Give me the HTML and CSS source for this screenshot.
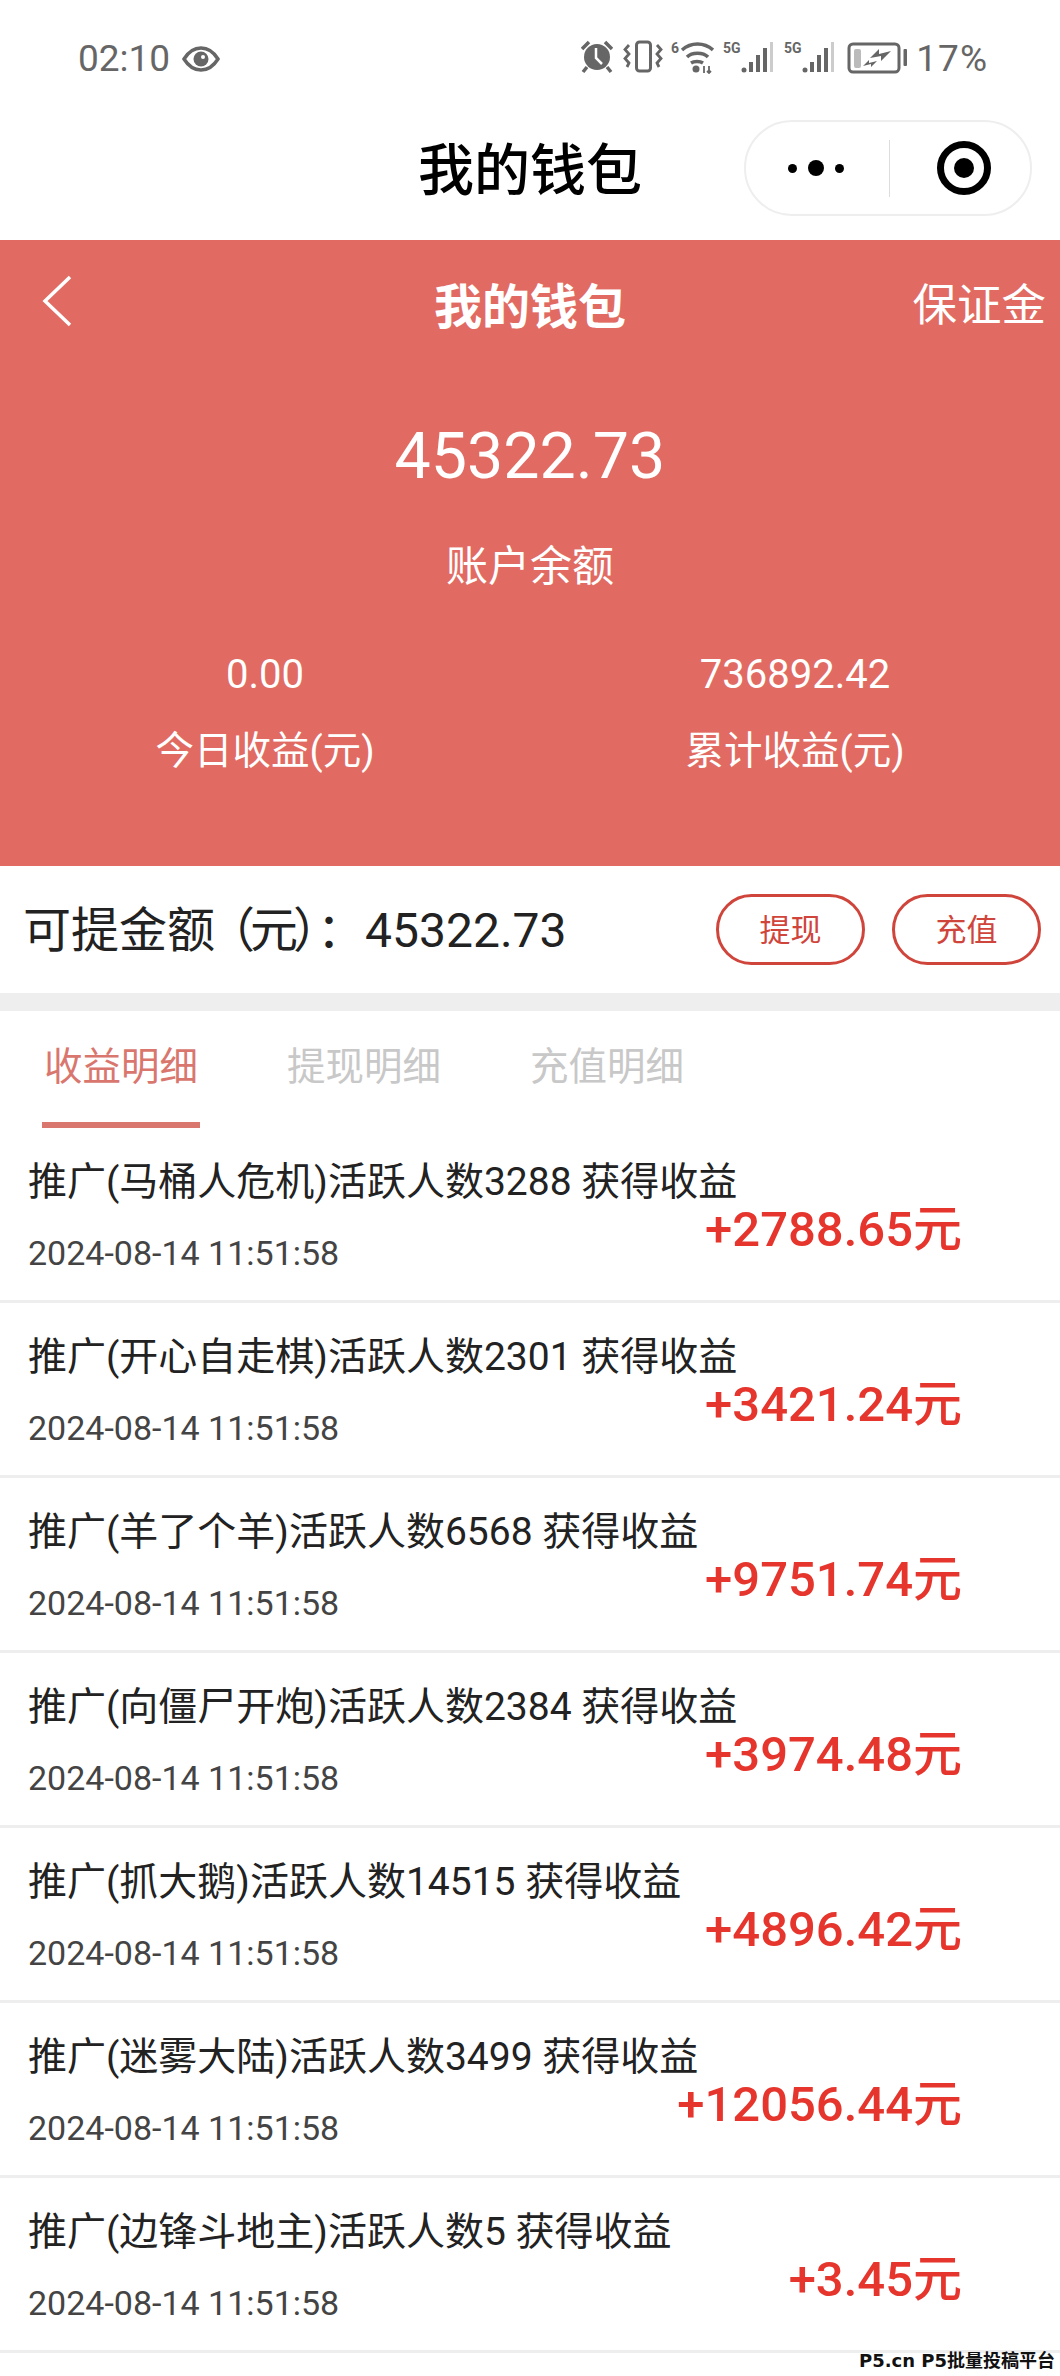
FILE: index.html
```html
<!DOCTYPE html>
<html lang="zh-CN">
<head>
    <meta charset="UTF-8">
    <title>我的钱包</title>
    <link rel="stylesheet" href="styles.css">
</head>
<body>
<div class="page">
    <div class="status">
        <div class="status-left">
            <span>02:10</span>
            <svg class="ico-eye" viewBox="0 0 38 26"><path d="M2 13C7 5 13 2 19 2s12 3 17 11c-5 8-11 11-17 11S7 21 2 13z" fill="none" stroke="#666" stroke-width="3.500"/><circle cx="19" cy="13" r="7.500" fill="#666"/><circle cx="21" cy="11" r="2" fill="#fff"/></svg>
        </div>
        <div class="status-right">
            <svg class="ico-alarm" viewBox="0 0 32 34"><circle cx="16" cy="17" r="13" fill="#666"/><path d="M15 8v10l6 6" fill="none" stroke="#fff" stroke-width="2.500"/><path d="M1 9l7-7M31 9l-7-7M6 27l-4 5M26 27l4 5" stroke="#666" stroke-width="3.500" fill="none"/></svg>
            <svg class="ico-vib" viewBox="0 0 40 34"><rect x="13.500" y="2" width="14" height="29" rx="3" fill="none" stroke="#666" stroke-width="3"/><path d="M6 5L2 9.500 6 14l-4 4.500L6 23l-2 4M34 5l4 4.500-4 4.500 4 4.500-4 4.500 2 4" fill="none" stroke="#666" stroke-width="2.800"/></svg>
            <svg class="ico-wifi" viewBox="0 0 43 34"><text x="0" y="13" class="ico-txt">6</text><path d="M11 10C20 2 33 2 42 10M16 17c5-5 16-5 21 0M20 23c3-2 9-2 12 0" fill="none" stroke="#666" stroke-width="3.500"/><circle cx="25" cy="29" r="3.500" fill="#666"/><path d="M33 33v-7M38 26v7M36 31l2 2 2-2" fill="none" stroke="#666" stroke-width="1.800"/></svg>
            <svg class="ico-sig" viewBox="0 0 50 34"><text x="0" y="13" class="ico-txt">5G</text><circle cx="21" cy="30" r="2.500" fill="#666"/><path d="M26 22h4v10h-4zM33 15h4v17h-4zM40 8h4v24h-4z" fill="#666"/><path d="M47 2h3v30h-3z" fill="#ccc"/></svg>
            <svg class="ico-sig" viewBox="0 0 50 34"><text x="0" y="13" class="ico-txt">5G</text><circle cx="21" cy="30" r="2.500" fill="#666"/><path d="M26 22h4v10h-4zM33 15h4v17h-4zM40 8h4v24h-4z" fill="#666"/><path d="M47 2h3v30h-3z" fill="#ccc"/></svg>
            <svg class="ico-batt" viewBox="0 0 60 34"><rect x="2" y="4" width="50" height="28" rx="4" fill="none" stroke="#666" stroke-width="3"/><rect x="7" y="9" width="7" height="19" rx="2" fill="#bbb"/><path d="M23 18l9-9 0 5 12-3-10 10 0-5z" fill="#666"/><path d="M16 26l6-6 0 3 8-2-6 6 0-3z" fill="#666"/><rect x="56.500" y="9" width="3.500" height="17" rx="1" fill="#666"/></svg>
            <span class="batt-num">17%</span>
        </div>
    </div>

    <div class="nav">
        <div></div>
        <div class="nav-title">我的钱包</div>
        <div class="capsule">
            <div class="capsule-dots"><i></i><b></b><i></i></div>
            <div class="capsule-line"></div>
            <div class="capsule-target"><span></span></div>
        </div>
    </div>

    <div class="head">
        <div class="head-top">
            <svg class="back" viewBox="0 0 32 52"><path d="M29 2L4 26l25 24" fill="none" stroke="#fff" stroke-width="3.500"/></svg>
            <div class="head-title">我的钱包</div>
            <div class="head-link">保证金</div>
        </div>
        <div class="balance">45322.73</div>
        <div class="balance-label">账户余额</div>
        <div class="stats">
            <div class="stat">
                <div class="stat-num">0.00</div>
                <div class="stat-label">今日收益(元)</div>
            </div>
            <div class="stat">
                <div class="stat-num">736892.42</div>
                <div class="stat-label">累计收益(元)</div>
            </div>
        </div>
    </div>

    <div class="withdraw">
        <div class="withdraw-text">可提金额<span class="unit">（元</span>）：45322.73</div>
        <div class="btns">
            <a class="btn" href="javascript:;">提现</a>
            <a class="btn" href="javascript:;">充值</a>
        </div>
    </div>

    <div class="tabs">
        <div class="tab on">收益明细</div>
        <div class="tab">提现明细</div>
        <div class="tab">充值明细</div>
    </div>

    <ul class="list">
        <li class="row">
            <div class="row-left">
                <div class="row-title">推广(马桶人危机)活跃人数3288 获得收益</div>
                <div class="row-date">2024-08-14 11:51:58</div>
            </div>
            <div class="row-money">+2788.65元</div>
        </li>
        <li class="row">
            <div class="row-left">
                <div class="row-title">推广(开心自走棋)活跃人数2301 获得收益</div>
                <div class="row-date">2024-08-14 11:51:58</div>
            </div>
            <div class="row-money">+3421.24元</div>
        </li>
        <li class="row">
            <div class="row-left">
                <div class="row-title">推广(羊了个羊)活跃人数6568 获得收益</div>
                <div class="row-date">2024-08-14 11:51:58</div>
            </div>
            <div class="row-money">+9751.74元</div>
        </li>
        <li class="row">
            <div class="row-left">
                <div class="row-title">推广(向僵尸开炮)活跃人数2384 获得收益</div>
                <div class="row-date">2024-08-14 11:51:58</div>
            </div>
            <div class="row-money">+3974.48元</div>
        </li>
        <li class="row">
            <div class="row-left">
                <div class="row-title">推广(抓大鹅)活跃人数14515 获得收益</div>
                <div class="row-date">2024-08-14 11:51:58</div>
            </div>
            <div class="row-money">+4896.42元</div>
        </li>
        <li class="row">
            <div class="row-left">
                <div class="row-title">推广(迷雾大陆)活跃人数3499 获得收益</div>
                <div class="row-date">2024-08-14 11:51:58</div>
            </div>
            <div class="row-money">+12056.44元</div>
        </li>
        <li class="row">
            <div class="row-left">
                <div class="row-title">推广(边锋斗地主)活跃人数5 获得收益</div>
                <div class="row-date">2024-08-14 11:51:58</div>
            </div>
            <div class="row-money">+3.45元</div>
        </li>
    </ul>

    <div class="mark">P5.cn P5批量投稿平台</div>
</div>
</body>
</html>
```
FILE: styles.css
```css
* {
    margin: 0;
    padding: 0;
    box-sizing: border-box;
}
body {
    font-family: Roboto, "Noto Sans CJK SC", sans-serif;
    background-color: #fff;
}
.page {
    width: 1060px;
    height: 2376px;
    position: relative;
    overflow: hidden;
}

/* status bar */
.status {
    height: 112px;
    padding: 37px 0 0 78px;
    display: flex;
    justify-content: space-between;
    color: #666;
    font-size: 37px;
    line-height: 43px;
}
.status-left {
    display: flex;
    align-items: center;
    gap: 12px;
    height: 43px;
}
.status-right {
    display: flex;
    align-items: flex-start;
    height: 43px;
    padding-right: 72px;
}
.status-right svg {
    height: 34px;
    margin-top: 3px;
}
.ico-eye { width: 38px; height: 26px; }
.ico-alarm { width: 32px; margin-right: 10px; }
.ico-vib { width: 40px; margin-right: 8px; }
.ico-wifi { width: 43px; margin-right: 9px; }
.ico-sig { width: 50px; margin-right: 11px; }
.ico-sig + .ico-batt { margin-left: 2px; }
.ico-batt { width: 60px; }
.ico-txt { font-size: 14px; font-weight: 700; fill: #666; }
.batt-num { margin-left: 9px; letter-spacing: 1px; }

/* wechat nav */
.nav {
    height: 128px;
    display: grid;
    grid-template-columns: 1fr auto 1fr;
    align-items: center;
}
.nav-title {
    font-size: 56px;
    line-height: 60px;
    font-weight: 500;
    color: #000;
    margin-top: -10px;
}
.capsule {
    justify-self: end;
    width: 288px;
    height: 96px;
    margin-right: 28px;
    margin-top: -16px;
    border: 2px solid #eee;
    border-radius: 48px;
    display: flex;
    align-items: center;
    padding-left: 42px;
}
.capsule-dots {
    width: 56px;
    display: flex;
    align-items: center;
    justify-content: space-between;
}
.capsule-dots i {
    width: 9px;
    height: 9px;
    border-radius: 50%;
    background-color: #000;
}
.capsule-dots b {
    width: 16px;
    height: 16px;
    border-radius: 50%;
    background-color: #000;
}
.capsule-line {
    width: 1px;
    height: 57px;
    margin-left: 45px;
    background-color: #ddd;
}
.capsule-target {
    width: 54px;
    height: 54px;
    margin-left: 47px;
    border: 7px solid #000;
    border-radius: 50%;
    display: flex;
    align-items: center;
    justify-content: center;
}
.capsule-target span {
    width: 20px;
    height: 20px;
    border-radius: 50%;
    background-color: #000;
}

/* red head */
.head {
    height: 626px;
    background-color: #e16b62;
    color: #fff;
    text-align: center;
}
.head-top {
    height: 130px;
    padding: 38px 14px 0;
    display: grid;
    grid-template-columns: 1fr auto 1fr;
    align-items: start;
}
.back {
    width: 32px;
    height: 52px;
    margin: -3px 0 0 27px;
}
.head-title {
    font-size: 48px;
    line-height: 60px;
    font-weight: 700;
}
.head-link {
    justify-self: end;
    font-size: 44.500px;
    line-height: 56px;
}
.balance {
    font-size: 64.500px;
    line-height: 70px;
    margin-top: 51px;
}
.balance-label {
    font-size: 42px;
    line-height: 56px;
    margin-top: 48px;
}
.stats {
    display: grid;
    grid-template-columns: 1fr 1fr;
    margin-top: 58px;
}
.stat-num {
    font-size: 40px;
    line-height: 44px;
}
.stat-label {
    font-size: 38.500px;
    line-height: 50px;
    margin-top: 29px;
}

/* withdraw row */
.withdraw {
    height: 145px;
    padding: 0 19px 0 23px;
    border-bottom: 18px solid #eee;
    display: flex;
    align-items: center;
    justify-content: space-between;
}
.withdraw-text {
    font-size: 48px;
    line-height: 60px;
    color: #222;
    margin-top: 3px;
}
.unit {
    margin-left: -8px;
    letter-spacing: -5px;
}
.btns {
    display: flex;
    gap: 27px;
}
.btn {
    width: 149px;
    height: 71px;
    border: 3px solid #d0453b;
    border-radius: 36px;
    color: #d0453b;
    font-size: 31px;
    line-height: 68px;
    text-align: center;
    text-decoration: none;
}

/* tabs */
.tabs {
    height: 117px;
    padding-left: 42px;
    display: flex;
    gap: 85px;
}
.tab {
    width: 158px;
    height: 117px;
    padding-top: 31px;
    text-align: center;
    font-size: 38.500px;
    line-height: 50px;
    color: #c8c8c8;
}
.tab.on {
    color: #d9776f;
    border-bottom: 6px solid #d9776f;
}

/* list */
.list {
    list-style: none;
}
.row {
    height: 175px;
    padding: 0 98px 0 28px;
    border-bottom: 3px solid #eee;
    display: flex;
    align-items: flex-start;
    justify-content: space-between;
}
.row-left {
    flex: 1;
    min-width: 0;
}
.row-title {
    font-size: 39px;
    line-height: 50px;
    color: #222;
    margin-top: 29px;
    white-space: nowrap;
}
.row-date {
    font-size: 34px;
    line-height: 40px;
    color: #444;
    margin-top: 26px;
    white-space: nowrap;
}
.row-money {
    flex: none;
    font-size: 49px;
    line-height: 56px;
    font-weight: 500;
    color: #e5352c;
    margin-top: 74px;
    white-space: nowrap;
}

/* watermark */
.mark {
    position: absolute;
    right: 5px;
    bottom: 4px;
    font-family: "DejaVu Sans", "Noto Sans CJK SC", sans-serif;
    font-weight: 700;
    font-size: 18px;
    line-height: 22px;
    color: #111;
}
```
